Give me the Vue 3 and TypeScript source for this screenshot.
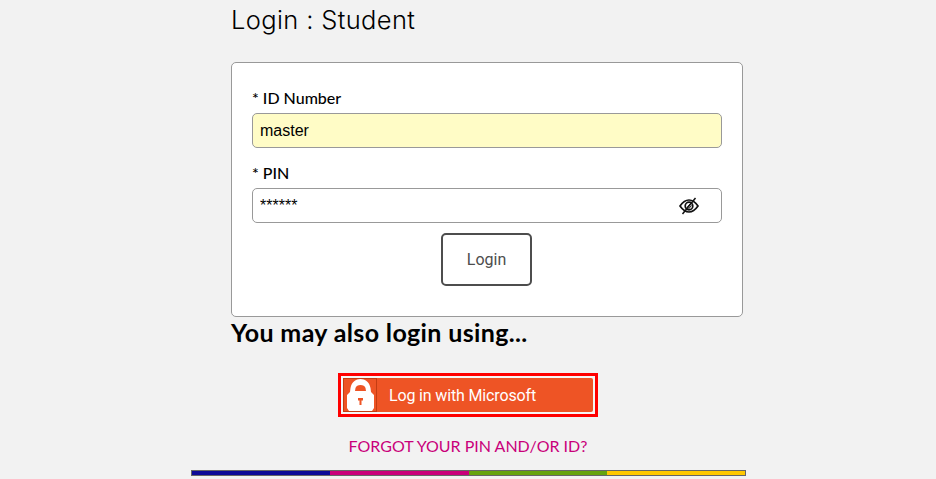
<template>
  <div class="page">
    <div class="content">
      <h1 class="title">Login : Student</h1>
      <form class="card" @submit.prevent>
        <label class="field-label" for="idnum">* ID Number</label>
        <input id="idnum" v-model="idNumber" class="text-input filled" type="text" />
        <label class="field-label pin-label" for="pin">* PIN</label>
        <div class="pin-wrap">
          <input id="pin" v-model="pin" class="text-input" type="text" />
          <svg class="eye" viewBox="0 0 20 18" width="20" height="18" fill="none" stroke="#111">
            <path d="M1 9 C4.5 4 7 3 10 3 C13 3 15.500 4 19 9 C15.500 14 13 15 10 15 C7 15 4.500 14 1 9 Z" stroke-width="1.700" />
            <circle cx="10" cy="9" r="3.800" stroke-width="1.700" />
            <path d="M8 10.500 L11.500 6.500 M9.500 12 L12.500 8.500" stroke-width="1" />
            <path d="M16.500 1 L3.500 17" stroke-width="1.500" />
          </svg>
        </div>
        <div class="actions">
          <button class="login-btn" type="submit">Login</button>
        </div>
      </form>
      <h2 class="also">You may also login using...</h2>
      <div class="ms-row">
        <button class="ms-btn" type="button">
          <span class="ms-inner">
            <span class="lock-box">
              <svg viewBox="0 0 27 32" width="27" height="32">
                <path d="M2 32 L0 29 L0 16 L3 13 L3.500 9 C4.500 3 9 0 13.500 0 C18 0 22.500 3 23.500 9 L24 13 L27 16 L27 29 L25 32 Z" fill="#fff" />
                <path d="M8 12 L8.500 9 C9 7 11 6 13.500 6 C16 6 18 7 18.500 9 L19 12 Z" fill="#ee5425" />
                <path d="M11 19 H16 V21.500 H14.500 V26 H12.500 V21.500 H11 Z" fill="#ee5425" />
              </svg>
            </span>
            <span class="ms-text">Log in with Microsoft</span>
          </span>
        </button>
      </div>
      <a class="forgot" href="#">FORGOT YOUR PIN AND/OR ID?</a>
    </div>
    <div class="strip">
      <span v-for="c in stripColors" :key="c" class="strip-part" :style="{ background: c }"></span>
    </div>
  </div>
</template>

<script setup lang="ts">
import { ref } from 'vue'

const idNumber = ref('master')
const pin = ref('******')
const stripColors = ['#0e0a96', '#c9007a', '#66a30f', '#ffc800']
</script>

<style>
html,
body {
  background: #f2f2f2;
  overflow: hidden;
}
</style>

<style scoped>
.page {
  width: 936px;
  height: 479px;
  padding-left: 191px;
  box-sizing: border-box;
  font-family: "Lato", "Liberation Sans", sans-serif;
  color: #000;
}

.content {
  width: 555px;
  padding-left: 40px;
  box-sizing: border-box;
}

.title {
  margin: 0;
  padding-top: 4px;
  height: 62px;
  box-sizing: border-box;
  font-family: "Inter", "Lato", sans-serif;
  font-size: 25.500px;
  line-height: 32px;
  font-weight: 300;
  letter-spacing: 0.36px;
}

.card {
  width: 512px;
  height: 255px;
  box-sizing: border-box;
  padding: 26px 20px 0;
  background: #fff;
  border: 1px solid #999;
  border-radius: 5px;
}

.field-label {
  display: block;
  height: 24px;
  font-size: 16px;
  line-height: 18px;
  font-weight: 500;
}

.pin-label {
  margin-top: 16px;
}

.text-input {
  display: block;
  width: 470px;
  height: 35px;
  box-sizing: border-box;
  padding: 0 7px;
  border: 1px solid #999;
  border-radius: 5px;
  background: #fff;
  font-family: "Liberation Sans", Arial, sans-serif;
  font-size: 16px;
  color: #000;
  outline: none;
}

.text-input.filled {
  background: #fffcc6;
}

.pin-wrap {
  position: relative;
}

.eye {
  position: absolute;
  top: 9px;
  right: 23px;
}

.actions {
  display: flex;
  justify-content: center;
  margin-top: 10px;
  padding-right: 1px;
}

.login-btn {
  width: 91px;
  height: 53px;
  box-sizing: border-box;
  border: 2px solid #4d4d4d;
  border-radius: 5px;
  background: #fff;
  color: #4d4d4d;
  font-family: "Roboto", "Liberation Sans", sans-serif;
  font-size: 16px;
}

.also {
  margin: 0;
  height: 56px;
  padding-top: 1px;
  box-sizing: border-box;
  font-size: 25px;
  line-height: 28px;
  font-weight: 700;
  letter-spacing: 0.36px;
}

.ms-row {
  display: flex;
  justify-content: center;
  width: 474px;
  height: 44px;
}

.ms-btn {
  width: 260px;
  height: 44px;
  box-sizing: border-box;
  padding: 0;
  border: 3px solid #f00;
  background: #f6f6f6;
  display: flex;
  align-items: center;
  justify-content: center;
}

.ms-inner {
  display: flex;
  align-items: center;
  width: 250px;
  height: 34px;
  box-sizing: border-box;
  background: #ee5425;
  border-radius: 2px;
}

.lock-box {
  display: flex;
  align-items: center;
  justify-content: center;
  width: 34px;
  height: 34px;
  box-sizing: border-box;
  border: 1px solid #c43c12;
}

.ms-text {
  margin-left: 12px;
  font-family: "Roboto", "Liberation Sans", sans-serif;
  font-size: 16px;
  letter-spacing: -0.15px;
  color: #fff;
}

.forgot {
  display: block;
  width: 474px;
  margin-top: 18px;
  height: 35px;
  text-align: center;
  font-size: 16px;
  line-height: 22px;
  color: #c9007a;
  text-decoration: none;
}

.strip {
  display: flex;
  width: 555px;
  height: 6px;
  box-sizing: border-box;
  border: 1px solid #666;
}

.strip-part {
  flex: 1;
}
</style>
